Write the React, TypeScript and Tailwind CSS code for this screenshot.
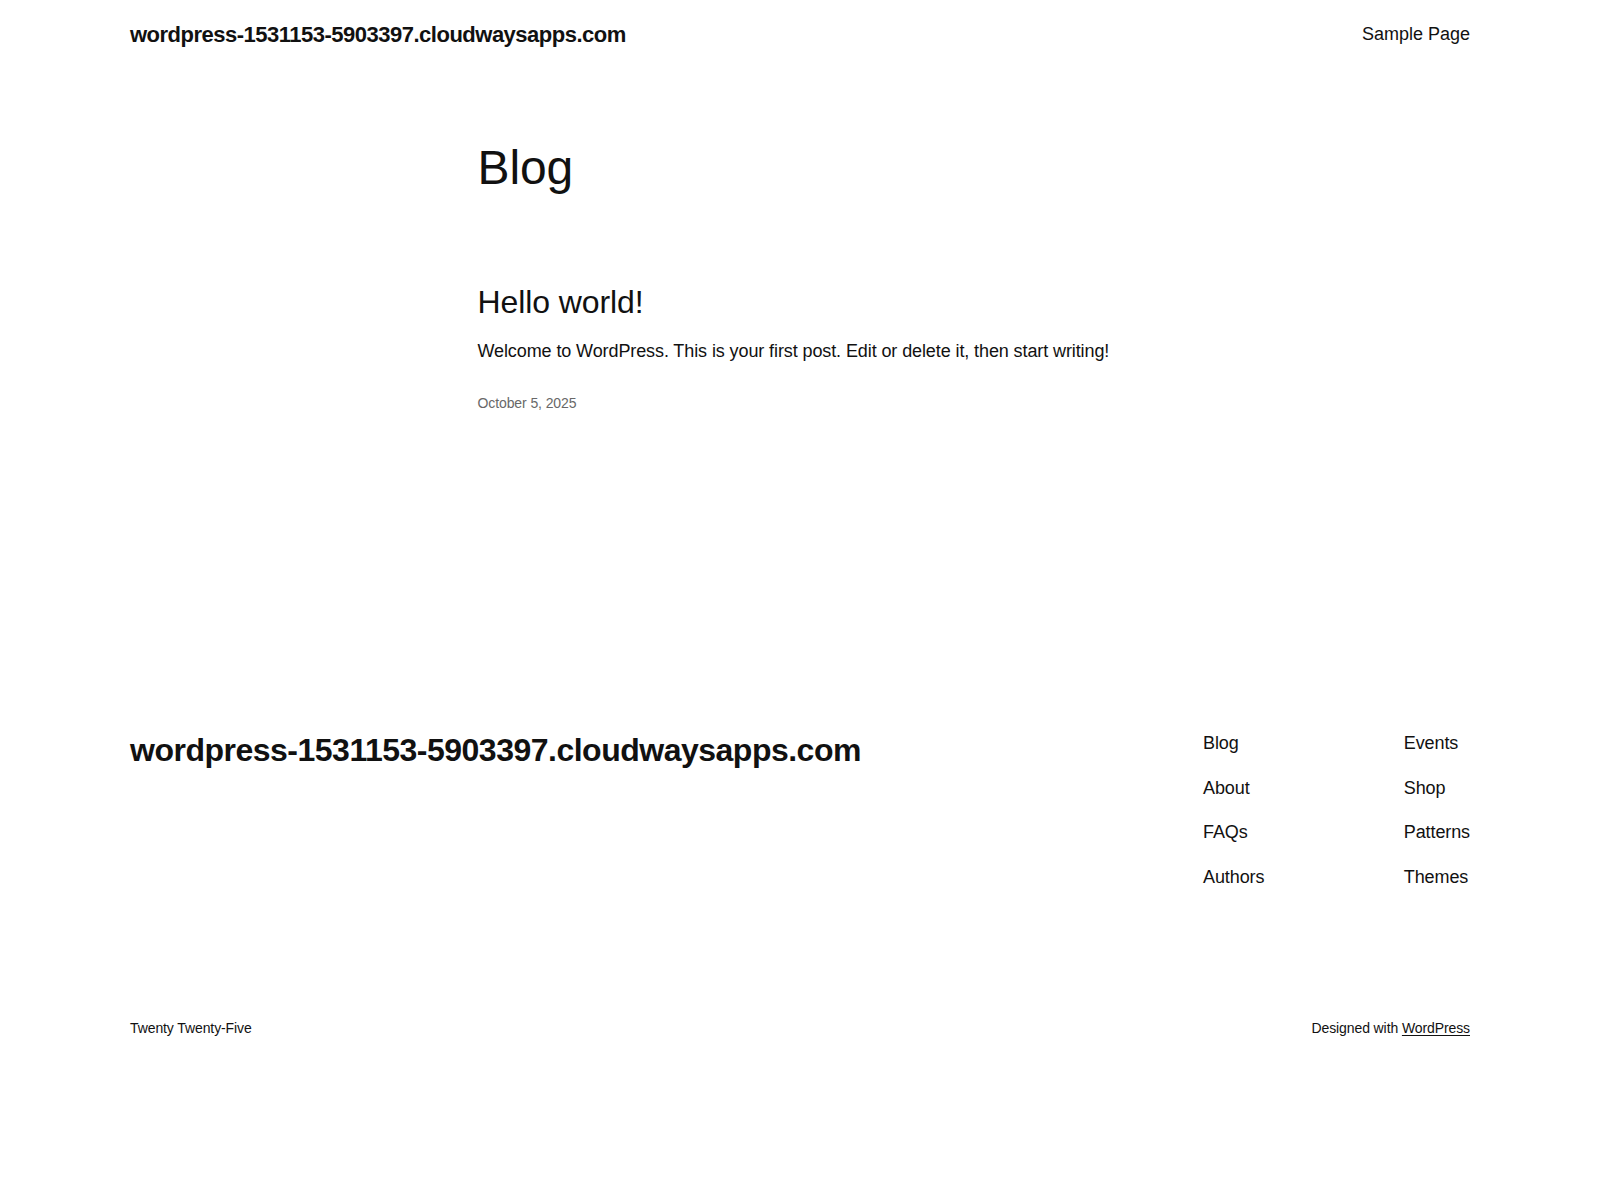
import React from "react";

export default function App() {
  return (
    <div className="min-h-[1200px] bg-white text-[#111111] font-['Liberation_Sans',Arial,sans-serif]">
      <header className="mx-auto w-[1340px] pt-[19px] flex items-center justify-between">
        <a className="text-[22px] leading-[31px] font-bold tracking-[-0.5px]">
          wordpress-1531153-5903397.cloudwaysapps.com
        </a>
        <nav className="text-[18px] leading-[27px]">
          <a>Sample Page</a>
        </nav>
      </header>

      <main className="mx-auto w-[645px]">
        <h1 className="mt-[89px] text-[48px] leading-[58px] tracking-[-0.1px]">Blog</h1>
        <h2 className="mt-[86px] text-[32px] leading-[38px] tracking-[-0.1px]">Hello world!</h2>
        <p className="mt-[16px] text-[18px] leading-[29px] tracking-[-0.1px]">
          Welcome to WordPress. This is your first post. Edit or delete it, then start writing!
        </p>
        <div className="mt-[27px] text-[14px] leading-[20px] text-[#686868] tracking-[-0.1px]">
          October 5, 2025
        </div>
      </main>

      <footer className="mx-auto w-[1340px] mt-[317px]">
        <div className="flex items-start justify-between">
          <div className="mt-[1px] text-[32px] leading-[38px] font-bold tracking-[-0.5px]">
            wordpress-1531153-5903397.cloudwaysapps.com
          </div>
          <div className="w-[267px] flex justify-between text-[18px] leading-[27px] tracking-[-0.1px]">
            <div className="flex flex-col gap-[17.5px]">
              <a>Blog</a>
              <a>About</a>
              <a>FAQs</a>
              <a>Authors</a>
            </div>
            <div className="flex flex-col gap-[17.5px]">
              <a>Events</a>
              <a>Shop</a>
              <a>Patterns</a>
              <a>Themes</a>
            </div>
          </div>
        </div>
        <div className="mt-[127px] flex justify-between text-[14px] leading-[20px] tracking-[-0.1px]">
          <p>Twenty Twenty-Five</p>
          <p>
            Designed with{" "}
            <a className="underline underline-offset-[2px] decoration-1">WordPress</a>
          </p>
        </div>
      </footer>
    </div>
  );
}
